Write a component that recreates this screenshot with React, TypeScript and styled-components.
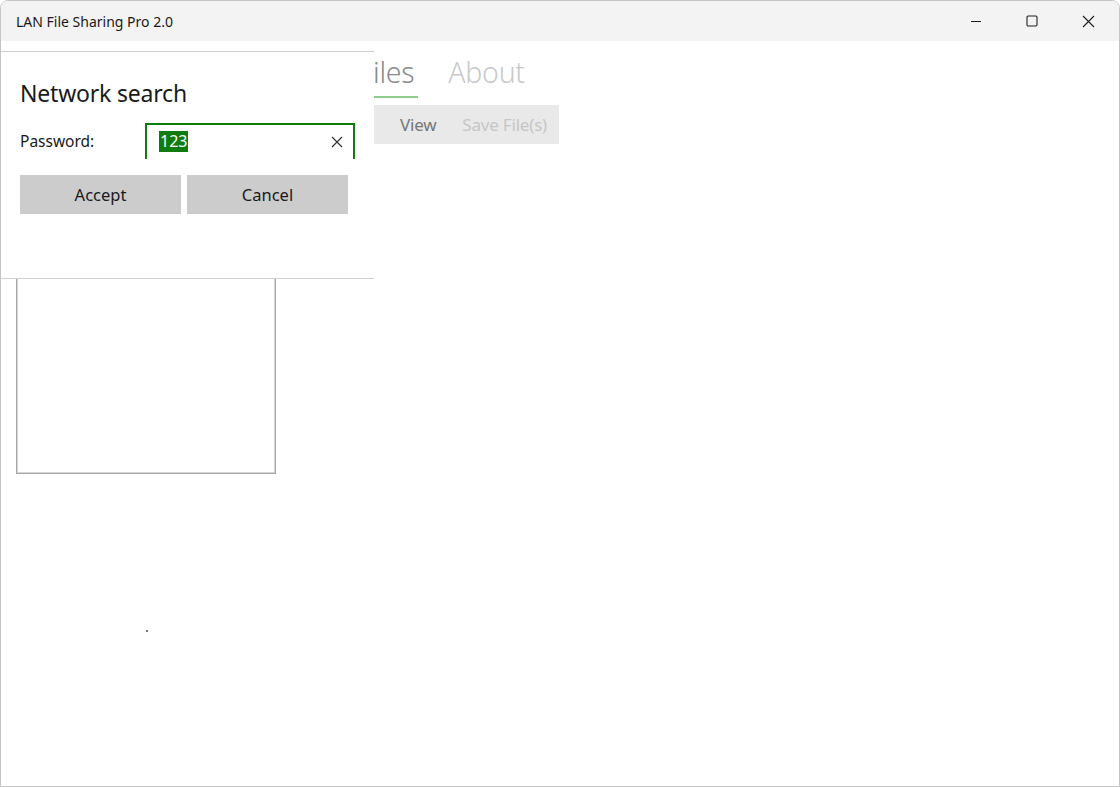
import React from "react";
import styled, { createGlobalStyle } from "styled-components";

const Global = createGlobalStyle`
  html, body { margin: 0; padding: 0; background: #ffffff; }
  body { font-family: "Noto Sans", "Open Sans", sans-serif; }
  #root { width: 1120px; height: 787px; }
`;

const Window = styled.div`
  width: 1120px;
  height: 787px;
  box-sizing: border-box;
  border: 1px solid #c4c4c4;
  border-radius: 8px 8px 0 0;
  background: #ffffff;
  display: flex;
  flex-direction: column;
  overflow: hidden;
`;

const TitleBar = styled.div`
  height: 40px;
  flex: none;
  background: #f3f3f3;
  display: flex;
  align-items: center;
  padding-left: 15px;
  padding-right: 3px;
`;

const Title = styled.div`
  flex: 1;
  font-size: 14px;
  color: #1a1a1a;
  letter-spacing: 0;
`;

const Caption = styled.button`
  width: 56px;
  height: 40px;
  border: 0;
  background: transparent;
  display: flex;
  align-items: center;
  justify-content: center;
  padding: 0;
  color: #1f1f1f;
`;

const Content = styled.div`
  position: relative;
  flex: 1;
  display: flex;
  flex-direction: column;
`;

const Tabs = styled.div`
  display: flex;
  gap: 30px;
  padding: 9px 0 0 358px;
`;

const Tab = styled.div<{ $active?: boolean }>`
  font-size: 28.5px;
  font-weight: 300;
  line-height: 44px;
  padding: 0 4px 2px 0;
  color: ${(p) => (p.$active ? "#8a8a8a" : "#c9c9c9")};
  border-bottom: 2px solid ${(p) => (p.$active ? "#8fcd8f" : "transparent")};
  letter-spacing: -0.3px;
`;

const Toolbar = styled.div`
  margin: 7px 0 0 300px;
  width: 258px;
  height: 39px;
  background: #e9e9e9;
  display: flex;
  align-items: center;
  justify-content: flex-end;
  gap: 26px;
  padding-right: 12px;
  box-sizing: border-box;
`;

const ToolItem = styled.span<{ $disabled?: boolean }>`
  font-size: 17px;
  letter-spacing: -0.2px;
  color: ${(p) => (p.$disabled ? "#c6c6c6" : "#777777")};
`;

const BoxArea = styled.div`
  flex: 1;
  display: flex;
  flex-direction: column;
`;

const ListBox = styled.div`
  margin: -1px 0 0 15px;
  width: 260px;
  height: 331px;
  box-sizing: border-box;
  border: 1px solid #a6a6a6;
  box-shadow: inset 0 0 0 1px #d6d6d6;
  align-self: flex-start;
`;

const Dot = styled.div`
  width: 2px;
  height: 2px;
  background: #777;
  margin: 156px 0 0 145px;
`;

const Flyout = styled.div`
  position: absolute;
  left: -1px;
  top: 10px;
  width: 374px;
  height: 228px;
  box-sizing: border-box;
  background: #ffffff;
  border-top: 1px solid #cfcfcf;
  border-bottom: 1px solid #cfcfcf;
  padding: 25px 15px 0 20px;
  display: flex;
  flex-direction: column;
`;

const FlyoutTitle = styled.div`
  font-size: 23px;
  color: #1a1a1a;
  line-height: 32px;
  letter-spacing: -0.2px;
`;

const FieldRow = styled.div`
  display: flex;
  align-items: flex-start;
  margin-top: 14px;
  height: 36px;
`;

const Label = styled.div`
  width: 125px;
  flex: none;
  font-size: 15.5px;
  color: #1a1a1a;
  padding-top: 7px;
`;

const TextBox = styled.div`
  width: 210px;
  flex: none;
  height: 36px;
  box-sizing: border-box;
  border: 2px solid #107c10;
  border-bottom: 0;
  display: flex;
  align-items: center;
  padding: 0 10px 0 12px;
`;

const Selected = styled.span`
  background: #107c10;
  color: #ffffff;
  font-size: 16px;
  line-height: 21px;
  padding: 0 1px;
  margin-bottom: 2px;
`;

const Grow = styled.div`
  flex: 1;
`;

const ButtonRow = styled.div`
  display: flex;
  gap: 6px;
  margin-top: 16px;
`;

const Button = styled.button`
  width: 161px;
  height: 39px;
  border: 0;
  background: #cccccc;
  font-family: inherit;
  font-size: 16.5px;
  color: #1a1a1a;
  padding: 0;
`;

export default function App() {
  return (
    <>
      <Global />
      <Window>
        <TitleBar>
          <Title>LAN File Sharing Pro 2.0</Title>
          <Caption aria-label="minimize">
            <svg width="12" height="12" viewBox="0 0 12 12">
              <path d="M1 6.5h10" stroke="#1f1f1f" strokeWidth="1.1" />
            </svg>
          </Caption>
          <Caption aria-label="maximize">
            <svg width="12" height="12" viewBox="0 0 12 12">
              <rect x="1" y="1" width="10" height="10" rx="1.2" fill="none" stroke="#1f1f1f" strokeWidth="1.1" />
            </svg>
          </Caption>
          <Caption aria-label="close">
            <svg width="13" height="13" viewBox="0 0 13 13">
              <path d="M1 1l11 11M12 1L1 12" stroke="#1f1f1f" strokeWidth="1.1" />
            </svg>
          </Caption>
        </TitleBar>
        <Content>
          <Tabs>
            <Tab $active>Files</Tab>
            <Tab>About</Tab>
          </Tabs>
          <Toolbar>
            <ToolItem>View</ToolItem>
            <ToolItem $disabled>Save File(s)</ToolItem>
          </Toolbar>
          <BoxArea>
            <ListBox />
            <Dot />
          </BoxArea>
          <Flyout>
            <FlyoutTitle>Network search</FlyoutTitle>
            <FieldRow>
              <Label>Password:</Label>
              <TextBox>
                <Selected>123</Selected>
                <Grow />
                <svg width="12" height="12" viewBox="0 0 12 12">
                  <path d="M1 1l10 10M11 1L1 11" stroke="#333" strokeWidth="1.2" />
                </svg>
              </TextBox>
            </FieldRow>
            <ButtonRow>
              <Button>Accept</Button>
              <Button>Cancel</Button>
            </ButtonRow>
          </Flyout>
        </Content>
      </Window>
    </>
  );
}
